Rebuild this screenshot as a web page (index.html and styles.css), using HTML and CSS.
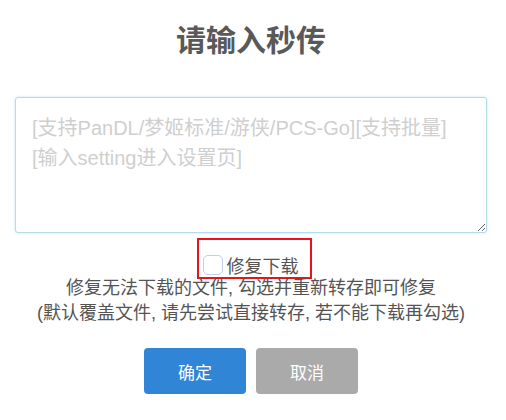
FILE: index.html
```html
<!DOCTYPE html>
<html lang="zh-CN">
  <head>
    <meta charset="UTF-8" />
    <meta name="viewport" content="width=device-width, initial-scale=1.0" />
    <title>请输入秒传</title>
    <link rel="stylesheet" href="styles.css">
  </head>
  <body>
    <div class="popup">
      <h2 class="title">请输入秒传</h2>
      <textarea class="input" placeholder="[支持PanDL/梦姬标准/游侠/PCS-Go][支持批量]&#10;[输入setting进入设置页]"></textarea>
      <label class="fix-label">
        <input type="checkbox" class="fix-check" />
        <span>修复下载</span>
      </label>
      <div class="desc">
        修复无法下载的文件, 勾选并重新转存即可修复<br />
        (默认覆盖文件, 请先尝试直接转存, 若不能下载再勾选)
      </div>
      <div class="actions">
        <button class="btn confirm">确定</button>
        <button class="btn cancel">取消</button>
      </div>
    </div>
  </body>
</html>
```

FILE: styles.css
```css
body {
  background-color: #fff;
  margin: 0;
  font-family: "Liberation Sans", "Noto Sans CJK SC", sans-serif;
}

.popup {
  padding: 23px 19px 0 15px;
  text-align: center;
  color: #545454;
}

.title {
  margin: 0;
  font-size: 30px;
  line-height: 36px;
  font-weight: bold;
  color: #595959;
}

.input {
  display: block;
  box-sizing: border-box;
  width: 100%;
  height: 136px;
  margin: 38px 0 0;
  padding: 15px 16px;
  font-family: "Liberation Sans", "Noto Sans CJK SC", sans-serif;
  font-size: 20px;
  line-height: 30px;
  color: #545454;
  border: 1px solid #b4dbed;
  border-radius: 3px;
  box-shadow: 0 0 3px #c4e6f5;
  outline: none;
}

.input::placeholder {
  color: #cfcfcf;
}

.fix-label {
  display: inline-flex;
  align-items: center;
  margin: 5px 0 0 6px;
  padding: 13px 11px 1px 4px;
  height: 23px;
  border: 2px solid #e8141c;
  font-size: 18px;
  color: #545454;
}

.fix-check {
  appearance: none;
  width: 20px;
  height: 20px;
  margin: 0 4px 0 0;
  border: 1px solid #c3cbef;
  border-radius: 5px;
  background: #fff;
}

.desc {
  margin-top: -3px;
  font-size: 18px;
  line-height: 25px;
}

.actions {
  display: flex;
  justify-content: center;
  gap: 10px;
  margin-top: 22px;
}

.btn {
  width: 102px;
  height: 46px;
  border: none;
  border-radius: 4px;
  color: #fff;
  font-family: "Liberation Sans", "Noto Sans CJK SC", sans-serif;
  font-size: 17px;
}

.confirm {
  background-color: #3085d6;
}

.cancel {
  background-color: #aaa;
}
```
